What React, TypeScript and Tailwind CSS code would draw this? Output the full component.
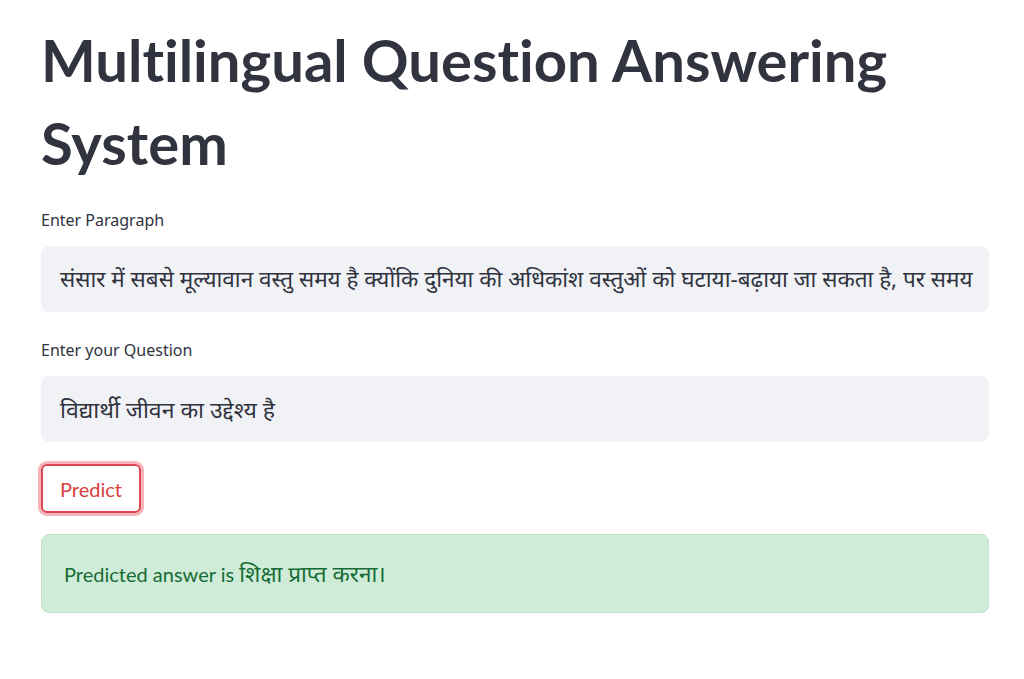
export default function App() {
    return (
        <div className="min-h-screen bg-white pl-[41px] pr-[35px] pt-[18px] text-[#31333f] [font-family:'Noto_Sans','Noto_Sans_Devanagari',sans-serif]">
            <h1 className="text-[58px] font-bold leading-[83px] [font-variant-ligatures:none] [font-family:Lato,'Noto_Sans',sans-serif]">
                Multilingual Question Answering System
            </h1>

            <div className="mt-[24px]">
                <label className="block text-[16px] leading-[24px]">Enter Paragraph</label>
                <div className="mt-[14px] flex h-[66px] items-center overflow-hidden whitespace-nowrap rounded-lg bg-[#f0f2f6] px-[19px] text-[22.5px]">
                    संसार में सबसे मूल्यावान वस्तु समय है क्योंकि दुनिया की अधिकांश वस्तुओं को घटाया-बढ़ाया जा सकता है, पर समय
                </div>
            </div>

            <div className="mt-[26px]">
                <label className="block text-[16px] leading-[24px]">Enter your Question</label>
                <div className="mt-[14px] flex h-[66px] items-center overflow-hidden whitespace-nowrap rounded-lg bg-[#f0f2f6] px-[19px] text-[23px]">
                    विद्यार्थी जीवन का उद्देश्य है
                </div>
            </div>

            <button className="mt-[22px] flex h-[49px] items-center rounded-md border-2 border-[#e0464f] px-[17px] text-[20px] text-[#d9403f] shadow-[0_0_0_3px_rgba(240,120,130,0.55)] [font-family:Lato,'Noto_Sans',sans-serif]">
                Predict
            </button>

            <div className="mt-[21px] flex h-[79px] items-center rounded-lg border border-[#bfe3c9] bg-[#ceecd7] px-[22px] text-[20px] text-[#176c35]">
                <span className="[font-family:Lato,'Noto_Sans',sans-serif]">Predicted answer is&nbsp;</span>
                <span className="text-[22.5px]">शिक्षा प्राप्त करना।</span>
            </div>
        </div>
    );
}
